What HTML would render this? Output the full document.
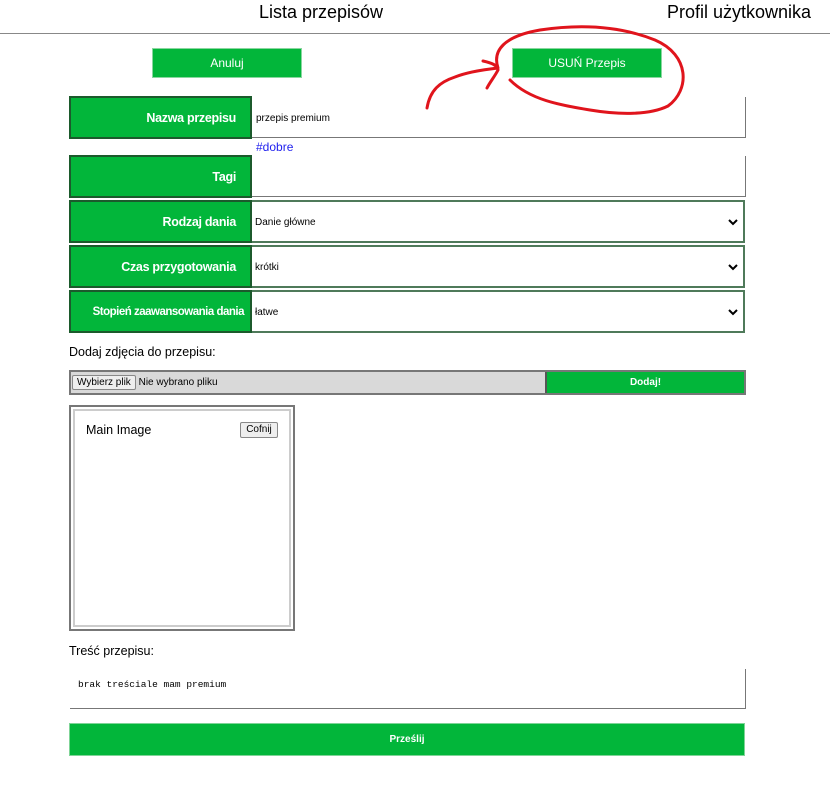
<!DOCTYPE html>
<html><head><meta charset="utf-8"><style>
*{box-sizing:border-box;margin:0;padding:0}
body{width:830px;height:807px;background:#fff;position:relative;overflow:hidden;font-family:"Liberation Sans",sans-serif;color:#000}
.a{position:absolute}
.g{background:#02b63a;color:#fff;font-size:12px;display:flex;align-items:center}
.lbl{justify-content:flex-end;padding-right:14px;border:2px solid #1c5a2c;font-size:12.5px;white-space:nowrap;letter-spacing:-0.3px}
.in{background:#fff;border-right:1px solid #777;border-bottom:1px solid #777;font-size:10px;display:flex;align-items:center;padding-left:4px;padding-top:2px}
.sel{background:#fff;border:2px solid #4f7a5a;border-left:none;font-size:10px;display:flex;align-items:center;padding-left:3px;padding-top:2px}
.chev{position:absolute;right:5px;top:50%;margin-top:-4px}
</style></head><body>
<div class="a" style="left:259px;top:2px;font-size:18px">Lista przepisów</div>
<div class="a" style="left:667px;top:2px;font-size:18px">Profil użytkownika</div>
<div class="a" style="left:0;top:33px;width:830px;height:1px;background:#888"></div>

<div class="a g" style="left:152px;top:48px;width:150px;height:30px;justify-content:center;border:1px solid #8ad69f">Anuluj</div>
<div class="a g" style="left:512px;top:48px;width:150px;height:30px;justify-content:center;border:1px solid #8ad69f">USUŃ Przepis</div>

<div class="a g lbl" style="left:69px;top:96px;width:183px;height:43px;font-weight:bold">Nazwa przepisu</div>
<div class="a in" style="left:252px;top:97px;width:494px;height:41px">przepis premium</div>
<div class="a" style="left:256px;top:140px;font-size:12px;color:#2222ee">#dobre</div>

<div class="a g lbl" style="left:69px;top:155px;width:183px;height:43px;font-weight:bold">Tagi</div>
<div class="a in" style="left:252px;top:156px;width:494px;height:41px"></div>

<div class="a g lbl" style="left:69px;top:200px;width:183px;height:43px;font-weight:bold">Rodzaj dania</div>
<div class="a sel" style="left:252px;top:200px;width:493px;height:43px">Danie główne<svg class="chev" width="10" height="8"><path d="M1 2L5 6L9 2" stroke="#000" stroke-width="2" fill="none"/></svg></div>

<div class="a g lbl" style="left:69px;top:245px;width:183px;height:43px;font-weight:bold">Czas przygotowania</div>
<div class="a sel" style="left:252px;top:245px;width:493px;height:43px">krótki<svg class="chev" width="10" height="8"><path d="M1 2L5 6L9 2" stroke="#000" stroke-width="2" fill="none"/></svg></div>

<div class="a g lbl" style="left:69px;top:290px;width:183px;height:43px;padding-right:6px;font-size:11.5px;font-weight:bold;letter-spacing:-0.5px">Stopień zaawansowania dania</div>
<div class="a sel" style="left:252px;top:290px;width:493px;height:43px">łatwe<svg class="chev" width="10" height="8"><path d="M1 2L5 6L9 2" stroke="#000" stroke-width="2" fill="none"/></svg></div>

<div class="a" style="left:69px;top:345px;font-size:12.5px">Dodaj zdjęcia do przepisu:</div>
<div class="a" style="left:69px;top:370px;width:677px;height:25px;border:2px solid #777;background:#d9d9d9;display:flex;align-items:center;font-size:10px">
<span style="margin-left:1px;border:1px solid #888;background:#eee;padding:1px 4px;border-radius:2px">Wybierz plik</span>&nbsp;Nie wybrano pliku
<div class="g" style="position:absolute;left:474px;top:0;width:199px;height:21px;justify-content:center;font-size:10px;border-left:2px solid #555;font-weight:bold">Dodaj!</div></div>

<div class="a" style="left:69px;top:405px;width:226px;height:226px;border:2px solid #777"><div style="position:absolute;inset:2px;border:2px solid #ccc"></div></div>
<div class="a" style="left:86px;top:423px;font-size:12.5px">Main Image</div>
<div class="a" style="left:240px;top:422px;width:38px;height:16px;border:1px solid #888;background:#eee;font-size:10px;text-align:center;line-height:14px;border-radius:2px">Cofnij</div>

<div class="a" style="left:69px;top:644px;font-size:12.5px">Treść przepisu:</div>
<div class="a" style="left:70px;top:669px;width:676px;height:40px;border-right:1px solid #777;border-bottom:1px solid #777;font-family:'Liberation Mono',monospace;font-size:9.5px;padding:10px 0 0 8px">brak treściale mam premium</div>

<div class="a g" style="left:69px;top:723px;width:676px;height:33px;justify-content:center;border:1px solid #7fd497;font-size:10px;font-weight:bold">Prześlij</div>

<svg class="a" style="left:0;top:0" width="830" height="807"><path d="M427 108C430 90 440 82 455 77C465 73 480 70 498 68M483 61C492 63 497 65 498 70M498 70C495 76 490 82 487 88M498 68C492 50 505 36 540 30C580 24 620 26 655 40C690 55 690 90 668 106C650 115 620 115 590 110C560 105 530 100 510 80" stroke="#e0141c" stroke-width="3" fill="none" stroke-linecap="round" stroke-linejoin="round"/></svg>
</body></html>
